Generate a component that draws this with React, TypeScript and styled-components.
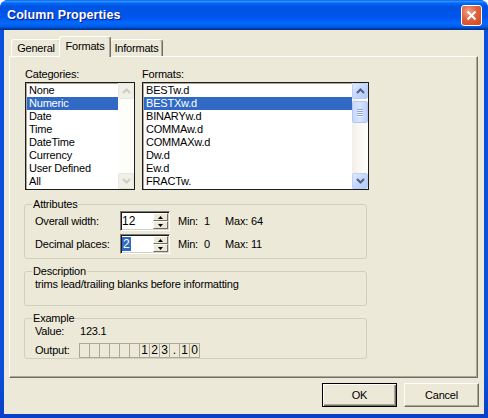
import React from "react";
import styled, { createGlobalStyle } from "styled-components";

const Global = createGlobalStyle`
  html, body { margin: 0; padding: 0; background: #ffffff; }
  body {
    font-family: "Liberation Sans", Arial, sans-serif;
    font-size: 11px;
    letter-spacing: -0.2px;
    color: #000;
  }
  * { box-sizing: border-box; }
`;

const Frame = styled.div`
  width: 488px;
  height: 418px;
  display: flex;
  flex-direction: column;
  background: linear-gradient(to bottom, #0a4ee0 0%, #0b4fd9 90%, #0a3fc8 100%);
  border-radius: 8px 8px 0 0;
  overflow: hidden;
`;

const TitleBar = styled.div`
  height: 30px;
  flex: none;
  display: flex;
  align-items: center;
  justify-content: space-between;
  padding: 0 6px 0 7px;
  background: linear-gradient(
    to bottom,
    #0058ee 0%,
    #3593ff 4%,
    #288eff 6%,
    #127dff 8%,
    #036ffc 10%,
    #0262ee 14%,
    #0057e5 20%,
    #0054e3 24%,
    #0055eb 56%,
    #005bf5 66%,
    #026afe 76%,
    #0062ef 86%,
    #0052d6 92%,
    #0040ab 94%,
    #003092 100%
  );
`;

const Title = styled.span`
  color: #ffffff;
  font-family: "Liberation Sans", Arial, sans-serif;
  font-weight: bold;
  font-size: 12.5px;
  letter-spacing: 0.1px;
  text-shadow: 1px 1px 0 #0a1a86;
`;

const CloseButton = styled.div`
  width: 21px;
  height: 21px;
  border: 1px solid #ffffff;
  border-radius: 3px;
  background: radial-gradient(circle at 35% 30%, #f2a088 0%, #e2603c 45%, #cc4520 100%);
  display: flex;
  align-items: center;
  justify-content: center;
`;

const Body = styled.div`
  flex: 1;
  margin: 0 4px 4px;
  background: #ece9d8;
  padding: 6px 6px 0 5px;
  display: flex;
  flex-direction: column;
`;

const TabsRow = styled.div`
  height: 20px;
  display: flex;
  align-items: flex-end;
  padding-left: 2px;
`;

const Tab = styled.div<{ $active?: boolean; $w: number; $ml: number }>`
  position: relative;
  z-index: ${(p) => (p.$active ? 2 : 0)};
  width: ${(p) => p.$w}px;
  margin-left: ${(p) => p.$ml}px;
  height: ${(p) => (p.$active ? 21 : 17)}px;
  margin-bottom: ${(p) => (p.$active ? -1 : 0)}px;
  padding-top: ${(p) => (p.$active ? 3 : 2)}px;
  background: #ece9d8;
  border-top: 1px solid #ffffff;
  border-left: 1px solid #ffffff;
  border-right: 1px solid #716f64;
  box-shadow: inset -1px 0 0 #aca899;
  border-radius: 3px 3px 0 0;
  text-align: center;
  line-height: 13px;
  white-space: nowrap;
`;

const Panel = styled.div`
  position: relative;
  z-index: 1;
  width: 469px;
  height: 322px;
  border: 1px solid;
  border-color: #ffffff #716f64 #716f64 #ffffff;
  box-shadow: inset -1px -1px 0 #aca899;
  padding: 11px 0 0 14px;
  display: flex;
  flex-direction: column;
`;

const ListsRow = styled.div`
  display: flex;
  gap: 7px;
  padding-left: 1px;
`;

const ListColumn = styled.div<{ $w: number }>`
  width: ${(p) => p.$w}px;
  display: flex;
  flex-direction: column;
`;

const FieldLabel = styled.div`
  line-height: 13px;
  height: 13px;
  margin-bottom: 1px;
`;

const ListBox = styled.div`
  height: 108px;
  display: flex;
  border: 1px solid #1c1c1c;
  box-shadow: inset 1px 1px 0 #aca899;
  background: #ffffff;
  overflow: hidden;
`;

const Items = styled.div`
  flex: 1;
  padding: 1px 0 0 1px;
  overflow: hidden;
`;

const Item = styled.div<{ $selected?: boolean }>`
  height: 13px;
  line-height: 13px;
  padding-left: 2px;
  white-space: nowrap;
  background: ${(p) => (p.$selected ? "#316ac5" : "transparent")};
  color: ${(p) => (p.$selected ? "#ffffff" : "#000000")};
`;

const Scrollbar = styled.div<{ $disabled?: boolean }>`
  width: 16px;
  flex: none;
  display: flex;
  flex-direction: column;
  background: ${(p) =>
    p.$disabled ? "#fdfdfa" : "linear-gradient(to right, #f1efe6 0%, #fbfaf6 60%, #fefefb 100%)"};
`;

const ScrollButton = styled.div<{ $disabled?: boolean }>`
  width: 16px;
  height: 16px;
  flex: none;
  display: flex;
  align-items: center;
  justify-content: center;
  border-radius: 2px;
  border: 1px solid ${(p) => (p.$disabled ? "#e9e7dc" : "#bccdf6")};
  background: ${(p) =>
    p.$disabled
      ? "#f0efe8"
      : "linear-gradient(135deg, #e3ebfe 0%, #c8d8fc 45%, #b6cbf8 100%)"};
`;

const Thumb = styled.div`
  width: 16px;
  height: 22px;
  margin-top: 2px;
  border-radius: 2px;
  border: 1px solid #b3c6f4;
  background: linear-gradient(to right, #c9d9fd 0%, #d8e4fe 50%, #bfd1fa 100%);
  display: flex;
  flex-direction: column;
  align-items: center;
  justify-content: center;
  gap: 1px;
`;

const Grip = styled.div`
  width: 6px;
  height: 1px;
  background: #8ea6e0;
  box-shadow: 0 1px 0 #eef3ff;
`;

const Spacer = styled.div`
  flex: 1;
`;

const Group = styled.fieldset<{ $mt: number; $pb: number }>`
  width: 343px;
  margin: ${(p) => p.$mt}px 0 0 0;
  padding: 0 8px ${(p) => p.$pb}px 7px;
  border: 1px solid #d0d0bf;
  border-radius: 3px;
  min-width: 0;
`;

const Legend = styled.legend`
  padding: 0 1px;
  line-height: 13px;
  font-size: 11px;
`;

const AttrRow = styled.div<{ $mt?: number }>`
  display: flex;
  align-items: center;
  height: 20px;
  margin-top: ${(p) => p.$mt ?? 0}px;
  padding-left: 3px;
`;

const RowLabel = styled.div<{ $w: number }>`
  width: ${(p) => p.$w}px;
  flex: none;
  white-space: nowrap;
`;

const SpinBox = styled.div`
  width: 50px;
  height: 20px;
  display: flex;
  background: #ffffff;
  border: 1px solid;
  border-color: #7a7a7a #ffffff #ffffff #7a7a7a;
  box-shadow: inset 1px 1px 0 #1a1a1a, inset -1px -1px 0 #d4d0c8;
  padding: 1px;
`;

const SpinValue = styled.div`
  flex: 1;
  display: flex;
  align-items: center;
  padding-left: 0;
  font-size: 12px;
  letter-spacing: 0;
`;

const Selected = styled.span`
  background: #316ac5;
  color: #ffffff;
  line-height: 14px;
  padding: 0 1px;
`;

const SpinButtons = styled.div`
  width: 15px;
  display: flex;
  flex-direction: column;
`;

const SpinBtn = styled.div`
  flex: 1;
  background: #ece9d8;
  border: 1px solid;
  border-color: #ffffff #716f64 #716f64 #ffffff;
  display: flex;
  align-items: center;
  justify-content: center;
`;

const Stat = styled.div<{ $w: number; $ml?: number }>`
  width: ${(p) => p.$w}px;
  margin-left: ${(p) => p.$ml ?? 0}px;
  flex: none;
  white-space: nowrap;
`;

const DescText = styled.div`
  line-height: 13px;
  padding-left: 3px;
  white-space: nowrap;
`;

const ValueRow = styled.div`
  display: flex;
  line-height: 13px;
  padding-left: 3px;
`;

const OutputRow = styled.div`
  display: flex;
  align-items: center;
  margin-top: 5px;
  height: 14px;
  padding-left: 3px;
`;

const Cells = styled.div`
  display: flex;
  border-top: 1px solid #aca899;
  border-bottom: 1px solid #aca899;
  border-left: 1px solid #aca899;
  height: 15px;
`;

const Cell = styled.div`
  width: 10px;
  border-right: 1px solid #aca899;
  text-align: center;
  line-height: 13px;
  font-size: 12px;
  letter-spacing: 0;
`;

const ButtonRow = styled.div`
  display: flex;
  justify-content: flex-end;
  gap: 7px;
  margin-top: 5px;
  margin-right: -1px;
`;

const DialogButton = styled.button<{ $default?: boolean }>`
  width: 75px;
  height: 24px;
  font: inherit;
  font-size: 11px;
  letter-spacing: -0.2px;
  color: #000;
  background: #ece9d8;
  padding: 0;
  border: 1px solid;
  border-color: ${(p) => (p.$default ? "#000000" : "#ffffff #716f64 #716f64 #ffffff")};
  box-shadow: ${(p) =>
    p.$default
      ? "inset 1px 1px 0 #ffffff, inset -1px -1px 0 #716f64, inset -2px -2px 0 #aca899"
      : "inset -1px -1px 0 #aca899"};
`;

const Chevron = ({ dir, color }: { dir: "up" | "down"; color: string }) => (
  <svg width="9" height="6" viewBox="0 0 9 6">
    <polyline
      points={dir === "up" ? "1,5 4.5,1.5 8,5" : "1,1 4.5,4.5 8,1"}
      fill="none"
      stroke={color}
      strokeWidth="2"
    />
  </svg>
);

const Tri = ({ dir }: { dir: "up" | "down" }) => (
  <svg width="5" height="3" viewBox="0 0 5 3">
    <polygon points={dir === "up" ? "2.5,0 5,3 0,3" : "0,0 5,0 2.5,3"} fill="#000" />
  </svg>
);

const categories = ["None", "Numeric", "Date", "Time", "DateTime", "Currency", "User Defined", "All"];
const formats = [
  "BESTw.d",
  "BESTXw.d",
  "BINARYw.d",
  "COMMAw.d",
  "COMMAXw.d",
  "Dw.d",
  "Ew.d",
  "FRACTw.",
];
const output = ["", "", "", "", "", "", "1", "2", "3", ".", "1", "0"];

export default function App() {
  return (
    <>
      <Global />
      <Frame>
        <TitleBar>
          <Title>Column Properties</Title>
          <CloseButton>
            <svg width="11" height="11" viewBox="0 0 11 11">
              <line x1="1.5" y1="1.5" x2="9.5" y2="9.5" stroke="#fff" strokeWidth="2.2" />
              <line x1="9.5" y1="1.5" x2="1.5" y2="9.5" stroke="#fff" strokeWidth="2.2" />
            </svg>
          </CloseButton>
        </TitleBar>
        <Body>
          <TabsRow>
            <Tab $w={50} $ml={0}>General</Tab>
            <Tab $w={52} $ml={-2} $active>
              Formats
            </Tab>
            <Tab $w={53} $ml={-1}>Informats</Tab>
          </TabsRow>
          <Panel>
            <ListsRow>
              <ListColumn $w={110}>
                <FieldLabel>Categories:</FieldLabel>
                <ListBox>
                  <Items>
                    {categories.map((c) => (
                      <Item key={c} $selected={c === "Numeric"}>
                        {c}
                      </Item>
                    ))}
                  </Items>
                  <Scrollbar $disabled>
                    <ScrollButton $disabled>
                      <Chevron dir="up" color="#cfcdc0" />
                    </ScrollButton>
                    <Spacer />
                    <ScrollButton $disabled>
                      <Chevron dir="down" color="#cfcdc0" />
                    </ScrollButton>
                  </Scrollbar>
                </ListBox>
              </ListColumn>
              <ListColumn $w={227}>
                <FieldLabel>Formats:</FieldLabel>
                <ListBox>
                  <Items>
                    {formats.map((f) => (
                      <Item key={f} $selected={f === "BESTXw.d"}>
                        {f}
                      </Item>
                    ))}
                  </Items>
                  <Scrollbar>
                    <ScrollButton>
                      <Chevron dir="up" color="#4d6185" />
                    </ScrollButton>
                    <Thumb>
                      <Grip />
                      <Grip />
                      <Grip />
                      <Grip />
                    </Thumb>
                    <Spacer />
                    <ScrollButton>
                      <Chevron dir="down" color="#4d6185" />
                    </ScrollButton>
                  </Scrollbar>
                </ListBox>
              </ListColumn>
            </ListsRow>

            <Group $mt={8} $pb={4}>
              <Legend>Attributes</Legend>
              <AttrRow>
                <RowLabel $w={85}>Overall width:</RowLabel>
                <SpinBox>
                  <SpinValue>12</SpinValue>
                  <SpinButtons>
                    <SpinBtn>
                      <Tri dir="up" />
                    </SpinBtn>
                    <SpinBtn>
                      <Tri dir="down" />
                    </SpinBtn>
                  </SpinButtons>
                </SpinBox>
                <Stat $w={26} $ml={8}>Min:</Stat>
                <Stat $w={21}>1</Stat>
                <Stat $w={26}>Max:</Stat>
                <Stat $w={30}>64</Stat>
              </AttrRow>
              <AttrRow $mt={3}>
                <RowLabel $w={85}>Decimal places:</RowLabel>
                <SpinBox>
                  <SpinValue>
                    <Selected>2</Selected>
                  </SpinValue>
                  <SpinButtons>
                    <SpinBtn>
                      <Tri dir="up" />
                    </SpinBtn>
                    <SpinBtn>
                      <Tri dir="down" />
                    </SpinBtn>
                  </SpinButtons>
                </SpinBox>
                <Stat $w={26} $ml={8}>Min:</Stat>
                <Stat $w={21}>0</Stat>
                <Stat $w={26}>Max:</Stat>
                <Stat $w={30}>11</Stat>
              </AttrRow>
            </Group>

            <Group $mt={6} $pb={14}>
              <Legend>Description</Legend>
              <DescText>trims lead/trailing blanks before informatting</DescText>
            </Group>

            <Group $mt={6} $pb={1}>
              <Legend>Example</Legend>
              <ValueRow>
                <RowLabel $w={45}>Value:</RowLabel>
                <span>123.1</span>
              </ValueRow>
              <OutputRow>
                <RowLabel $w={44}>Output:</RowLabel>
                <Cells>
                  {output.map((o, i) => (
                    <Cell key={i}>{o}</Cell>
                  ))}
                </Cells>
              </OutputRow>
            </Group>
          </Panel>
          <ButtonRow>
            <DialogButton $default>OK</DialogButton>
            <DialogButton>Cancel</DialogButton>
          </ButtonRow>
        </Body>
      </Frame>
    </>
  );
}
